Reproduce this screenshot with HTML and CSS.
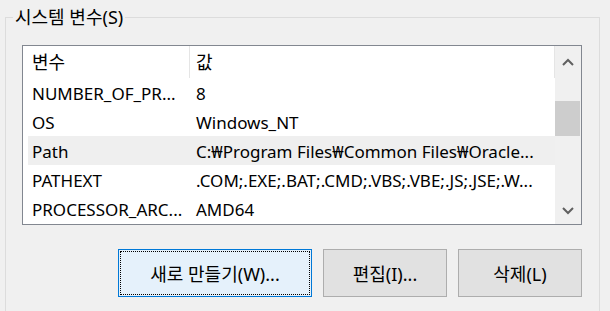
FILE: index.html
```html
<!DOCTYPE html>
<html lang="ko">
<head>
<meta charset="utf-8">
<link rel="stylesheet" href="styles.css">
</head>
<body>
<div class="window">
  <fieldset class="group">
    <legend class="group-title">시스템 변수(S)</legend>
    <div class="list">
      <div class="list-main">
        <div class="header">
          <div class="hcol hc1">변수</div>
          <div class="hcol hc2">값</div>
        </div>
        <div class="row"><div class="c1">NUMBER_OF_PR...</div><div class="c2">8</div></div>
        <div class="row"><div class="c1">OS</div><div class="c2">Windows_NT</div></div>
        <div class="row selected"><div class="c1">Path</div><div class="c2">C:₩Program Files₩Common Files₩Oracle...</div></div>
        <div class="row"><div class="c1">PATHEXT</div><div class="c2">.COM;.EXE;.BAT;.CMD;.VBS;.VBE;.JS;.JSE;.W...</div></div>
        <div class="row"><div class="c1">PROCESSOR_ARC...</div><div class="c2">AMD64</div></div>
      </div>
      <div class="scrollbar">
        <div class="sb-btn sb-up">
          <svg width="12" height="8" viewBox="0 0 12 8"><polyline points="1,7 6,2 11,7" fill="none" stroke="#606060" stroke-width="2"/></svg>
        </div>
        <div class="sb-track"><div class="sb-thumb"></div></div>
        <div class="sb-btn sb-down">
          <svg width="12" height="8" viewBox="0 0 12 8"><polyline points="1,1 6,6 11,1" fill="none" stroke="#606060" stroke-width="2"/></svg>
        </div>
      </div>
    </div>
    <div class="buttons">
      <button class="btn btn-default btn-new">새로 만들기(W)...</button>
      <button class="btn btn-small">편집(I)...</button>
      <button class="btn btn-small">삭제(L)</button>
    </div>
  </fieldset>
</div>
</body>
</html>
```
FILE: styles.css
```css
html, body {
  margin: 0;
  padding: 0;
  background: #f0f0f0;
  overflow: hidden;
}
body {
  font-family: "Noto Sans", "Noto Sans CJK KR", sans-serif;
  font-size: 17px;
  color: #000;
}
.window {
  width: 610px;
  height: 311px;
  padding-top: 5px;
  box-sizing: border-box;
}
.group {
  margin: 0 10px 0 5px;
  padding: 16px 16px 30px 16px;
  border: 1px solid #dcdcdc;
  min-inline-size: 0;
}
.group-title {
  margin-left: -9px;
  padding: 0 2px;
  line-height: 24px;
  font-size: 18px;
}
.list {
  display: flex;
  width: 560px;
  height: 180px;
  box-sizing: border-box;
  border: 1px solid #828790;
  background: #fff;
}
.list-main {
  flex: 1;
  overflow: hidden;
  background: #fff;
}
.header {
  display: flex;
  height: 32px;
  font-size: 18px;
}
.hcol {
  line-height: 32px;
  white-space: nowrap;
}
.hc1 {
  width: 157px;
  padding-left: 9px;
  border-right: 1px solid #e5e5e5;
}
.hc2 {
  flex: 1;
  padding-left: 6px;
  border-right: 1px solid #e5e5e5;
}
.row {
  display: flex;
  height: 29px;
  line-height: 29px;
  margin-left: 5px;
  white-space: nowrap;
  padding-top: 1px;
  box-sizing: border-box;
}
.row.selected {
  background: #efefef;
}
.c1 {
  width: 158px;
  padding-left: 4px;
  overflow: hidden;
}
.c2 {
  flex: 1;
  padding-left: 6px;
  overflow: hidden;
}
.scrollbar {
  width: 26px;
  display: flex;
  flex-direction: column;
  background: #f0f0f0;
}
.sb-btn {
  display: flex;
  align-items: center;
  justify-content: center;
}
.sb-up {
  height: 32px;
}
.sb-down {
  height: 26px;
}
.sb-track {
  flex: 1;
}
.sb-thumb {
  margin-top: 23px;
  height: 35px;
  margin-right: 1px;
  background: #cdcdcd;
}
.buttons {
  display: flex;
  justify-content: flex-end;
  gap: 11px;
  margin-top: 24px;
  width: 560px;
}
.btn {
  height: 48px;
  font-family: "Noto Sans", "Noto Sans CJK KR", sans-serif;
  font-size: 18px;
  color: #000;
  background: #e1e1e1;
  border: 1px solid #adadad;
  border-radius: 0;
  padding: 0;
  margin: 0;
}
.btn-new {
  width: 194px;
}
.btn-small {
  width: 124px;
}
.btn-default {
  background: #e5f1fb;
  border-color: #0078d7;
  outline: 1px dotted #000;
  outline-offset: -3px;
}
```
